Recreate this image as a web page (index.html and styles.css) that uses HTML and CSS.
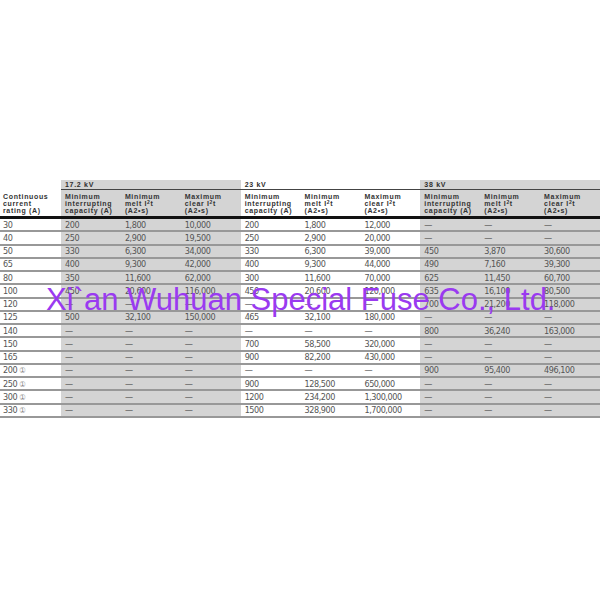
FILE: index.html
```html
<!DOCTYPE html>
<html>
<head>
<meta charset="utf-8">
<link rel="stylesheet" href="styles.css">
</head>
<body>
<div class="page">
  <div class="table">
    <div class="kvrow">
      <div class="kv-empty"></div>
      <div class="kv grey">17.2 kV</div>
      <div class="kv">23 kV</div>
      <div class="kv grey">38 kV</div>
    </div>
    <div class="row head">
      <div class="cell first">Continuous<br>current<br>rating (A)</div>
      <div class="cell grey">Minimum<br>interrupting<br>capacity (A)</div>
      <div class="cell grey">Minimum<br>melt I<sup>2</sup>t<br>(A2•s)</div>
      <div class="cell grey">Maximum<br>clear I<sup>2</sup>t<br>(A2•s)</div>
      <div class="cell">Minimum<br>interrupting<br>capacity (A)</div>
      <div class="cell">Minimum<br>melt I<sup>2</sup>t<br>(A2•s)</div>
      <div class="cell">Maximum<br>clear I<sup>2</sup>t<br>(A2•s)</div>
      <div class="cell grey">Minimum<br>interrupting<br>capacity (A)</div>
      <div class="cell grey">Minimum<br>melt I<sup>2</sup>t<br>(A2•s)</div>
      <div class="cell grey">Maximum<br>clear I<sup>2</sup>t<br>(A2•s)</div>
    </div>
    <div class="body">
      <div class="row data"><div class="cell first">30</div><div class="cell grey">200</div><div class="cell grey">1,800</div><div class="cell grey">10,000</div><div class="cell">200</div><div class="cell">1,800</div><div class="cell">12,000</div><div class="cell grey">—</div><div class="cell grey">—</div><div class="cell grey">—</div></div>
      <div class="row data"><div class="cell first">40</div><div class="cell grey">250</div><div class="cell grey">2,900</div><div class="cell grey">19,500</div><div class="cell">250</div><div class="cell">2,900</div><div class="cell">20,000</div><div class="cell grey">—</div><div class="cell grey">—</div><div class="cell grey">—</div></div>
      <div class="row data"><div class="cell first">50</div><div class="cell grey">330</div><div class="cell grey">6,300</div><div class="cell grey">34,000</div><div class="cell">330</div><div class="cell">6,300</div><div class="cell">39,000</div><div class="cell grey">450</div><div class="cell grey">3,870</div><div class="cell grey">30,600</div></div>
      <div class="row data"><div class="cell first">65</div><div class="cell grey">400</div><div class="cell grey">9,300</div><div class="cell grey">42,000</div><div class="cell">400</div><div class="cell">9,300</div><div class="cell">44,000</div><div class="cell grey">490</div><div class="cell grey">7,160</div><div class="cell grey">39,300</div></div>
      <div class="row data"><div class="cell first">80</div><div class="cell grey">350</div><div class="cell grey">11,600</div><div class="cell grey">62,000</div><div class="cell">300</div><div class="cell">11,600</div><div class="cell">70,000</div><div class="cell grey">625</div><div class="cell grey">11,450</div><div class="cell grey">60,700</div></div>
      <div class="row data"><div class="cell first">100</div><div class="cell grey">450</div><div class="cell grey">20,600</div><div class="cell grey">116,000</div><div class="cell">450</div><div class="cell">20,600</div><div class="cell">120,000</div><div class="cell grey">635</div><div class="cell grey">16,100</div><div class="cell grey">80,500</div></div>
      <div class="row data"><div class="cell first">120</div><div class="cell grey">—</div><div class="cell grey">—</div><div class="cell grey">—</div><div class="cell">—</div><div class="cell">—</div><div class="cell">—</div><div class="cell grey">700</div><div class="cell grey">21,200</div><div class="cell grey">118,000</div></div>
      <div class="row data"><div class="cell first">125</div><div class="cell grey">500</div><div class="cell grey">32,100</div><div class="cell grey">150,000</div><div class="cell">465</div><div class="cell">32,100</div><div class="cell">180,000</div><div class="cell grey">—</div><div class="cell grey">—</div><div class="cell grey">—</div></div>
      <div class="row data"><div class="cell first">140</div><div class="cell grey">—</div><div class="cell grey">—</div><div class="cell grey">—</div><div class="cell">—</div><div class="cell">—</div><div class="cell">—</div><div class="cell grey">800</div><div class="cell grey">36,240</div><div class="cell grey">163,000</div></div>
      <div class="row data"><div class="cell first">150</div><div class="cell grey">—</div><div class="cell grey">—</div><div class="cell grey">—</div><div class="cell">700</div><div class="cell">58,500</div><div class="cell">320,000</div><div class="cell grey">—</div><div class="cell grey">—</div><div class="cell grey">—</div></div>
      <div class="row data"><div class="cell first">165</div><div class="cell grey">—</div><div class="cell grey">—</div><div class="cell grey">—</div><div class="cell">900</div><div class="cell">82,200</div><div class="cell">430,000</div><div class="cell grey">—</div><div class="cell grey">—</div><div class="cell grey">—</div></div>
      <div class="row data"><div class="cell first">200 <span class="note">①</span></div><div class="cell grey">—</div><div class="cell grey">—</div><div class="cell grey">—</div><div class="cell">—</div><div class="cell">—</div><div class="cell">—</div><div class="cell grey">900</div><div class="cell grey">95,400</div><div class="cell grey">496,100</div></div>
      <div class="row data"><div class="cell first">250 <span class="note">①</span></div><div class="cell grey">—</div><div class="cell grey">—</div><div class="cell grey">—</div><div class="cell">900</div><div class="cell">128,500</div><div class="cell">650,000</div><div class="cell grey">—</div><div class="cell grey">—</div><div class="cell grey">—</div></div>
      <div class="row data"><div class="cell first">300 <span class="note">①</span></div><div class="cell grey">—</div><div class="cell grey">—</div><div class="cell grey">—</div><div class="cell">1200</div><div class="cell">234,200</div><div class="cell">1,300,000</div><div class="cell grey">—</div><div class="cell grey">—</div><div class="cell grey">—</div></div>
      <div class="row data"><div class="cell first">330 <span class="note">①</span></div><div class="cell grey">—</div><div class="cell grey">—</div><div class="cell grey">—</div><div class="cell">1500</div><div class="cell">328,900</div><div class="cell">1,700,000</div><div class="cell grey">—</div><div class="cell grey">—</div><div class="cell grey">—</div></div>
    </div>
  </div>
  <div class="watermark">Xi`an Wuhuan Special Fuse Co., Ltd.</div>
</div>
</body>
</html>
```
FILE: styles.css
```css
html, body {
  margin: 0;
  padding: 0;
  background: #ffffff;
}

.page {
  position: relative;
  width: 600px;
  height: 600px;
  padding-top: 180px;
  box-sizing: border-box;
}

.table {
  width: 600px;
}

.kvrow {
  display: grid;
  grid-template-columns: 61px 1fr 1fr 1fr;
  height: 10px;
}

.kv {
  font-family: "Liberation Sans", Arial, sans-serif;
  font-weight: bold;
  font-size: 7px;
  letter-spacing: 0.7px;
  color: #2e2e2e;
  line-height: 9px;
  padding-left: 4px;
  border-bottom: 1px solid #444444;
}

.grey {
  background: #d4d4d4;
}

.row {
  display: grid;
  grid-template-columns: 61px repeat(9, 1fr);
}

.head {
  height: 29px;
  box-sizing: border-box;
  border-bottom: 3px solid #111111;
}

.head .cell {
  font-family: "Liberation Sans", Arial, sans-serif;
  font-weight: bold;
  font-size: 7px;
  letter-spacing: 0.65px;
  line-height: 7px;
  color: #333333;
  padding-top: 3px;
}

.head sup {
  font-size: 5px;
  line-height: 0;
  vertical-align: 2px;
}

.cell {
  padding-left: 4px;
  white-space: nowrap;
  overflow: hidden;
}

.cell.first {
  padding-left: 3px;
}

.data {
  height: 13.27px;
  box-sizing: border-box;
  border-bottom: 2px solid #989898;
}

.data .cell {
  font-family: "Liberation Sans Narrow", "DejaVu Sans Condensed", "Liberation Sans", sans-serif;
  font-stretch: condensed;
  font-size: 9px;
  letter-spacing: -0.45px;
  line-height: 10px;
  color: #555555;
  padding-top: 0.5px;
}

.note {
  font-family: "DejaVu Sans", sans-serif;
  font-size: 8px;
  letter-spacing: 0;
  line-height: 8px;
  color: #8a8a8a;
}

.watermark {
  position: absolute;
  left: 46px;
  top: 284px;
  font-family: "Liberation Sans", Arial, sans-serif;
  font-size: 31px;
  line-height: 31px;
  color: #9a3af0;
  white-space: nowrap;
}
```
